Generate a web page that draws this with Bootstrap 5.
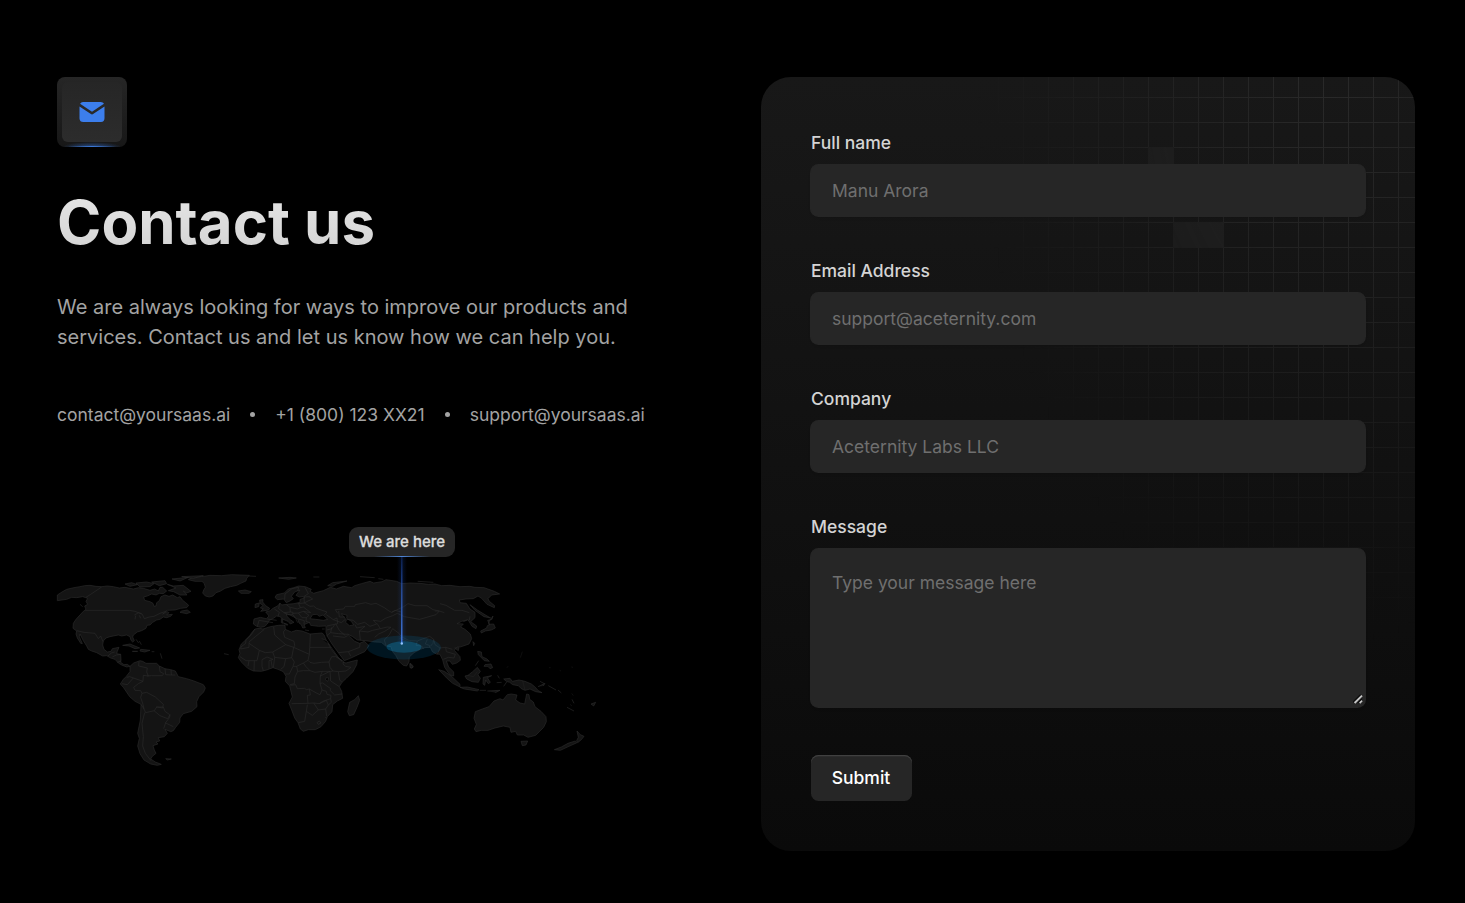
<!DOCTYPE html>
<html lang="en" data-bs-theme="dark">
<head>
<meta charset="utf-8">
<meta name="viewport" content="width=device-width, initial-scale=1">
<title>Contact us</title>
<link href="https://cdn.jsdelivr.net/npm/bootstrap@5.3.0/dist/css/bootstrap.min.css" rel="stylesheet">
<style>
  body { background: #000; color: #a3a3a3; font-family: Inter, "Liberation Sans", sans-serif; overflow: hidden; }
  .page-wrap { padding: 77px 50px 0 57px; }
  .page-wrap > .row { --bs-gutter-x: 50px; }
  .icon-tile { width: 70px; height: 70px; padding: 5px; border-radius: 8px; background: linear-gradient(#262626, #171717); position: relative; overflow: hidden; }
  .icon-tile-inner { width: 60px; height: 60px; border-radius: 6px; background: linear-gradient(#262626, #2c2c2c); }
  .icon-tile .glow { position: absolute; left: 5px; right: 5px; bottom: 0; height: 5px; background: radial-gradient(ellipse at 50% 100%, rgba(59,130,246,.5), transparent 70%); }
  .icon-tile .glow::after { content: ""; position: absolute; left: 0; right: 0; bottom: 0; height: 1px; background: linear-gradient(90deg, transparent 10%, #3b78d8, transparent 90%); }
  .hero-title { font-size: 60px; line-height: 60px; font-weight: 700; margin-top: 45px; background: linear-gradient(#e5e5e5, #d4d4d4); -webkit-background-clip: text; background-clip: text; color: transparent; }
  .hero-copy { font-size: 20px; line-height: 30px; margin-top: 40px; width: 640px; }
  .contact-line { font-size: 17.5px; line-height: 25px; margin-top: 50px; }
  .dot { width: 5px; height: 5px; border-radius: 50%; background: #a3a3a3; margin: 0 20px; }
  .map-box { width: 560px; height: 270px; margin: 80px 0 0 -7px; position: relative; }
  .map-box svg { display: block; }
  .pin-label { position: absolute; left: 299px; top: 20px; width: 106px; height: 30px; border-radius: 9px; background: #262626; color: #dcdcdc; font-size: 15px; line-height: 29px; font-weight: 500; -webkit-text-stroke: .3px #dcdcdc; text-align: center; white-space: nowrap; }
  .pin-label::after { content: ""; position: absolute; left: 25px; right: 25px; bottom: 0; height: 1px; background: linear-gradient(90deg, transparent, #4f86d8, transparent); }
  .form-card { height: 774px; padding: 50px; border-radius: 30px; background: linear-gradient(#181818, #0a0a0a); position: relative; overflow: hidden; }
  .grid-pattern { position: absolute; inset: 0; background-image: linear-gradient(90deg, #2a2a2a 1px, transparent 1px), linear-gradient(#2a2a2a 1px, transparent 1px); background-size: 25px 25px; background-position: 12px 20px; -webkit-mask-image: radial-gradient(ellipse 350px 580px at 565px -10px, #000, transparent); mask-image: radial-gradient(ellipse 350px 580px at 565px -10px, #000, transparent); }
  .grid-pattern i { position: absolute; height: 26px; background: #242424; }
  .grid-pattern .sq-a { left: 387px; top: 70px; width: 26px; }
  .grid-pattern .sq-b { left: 412px; top: 145px; width: 51px; }
  .form-card form { position: relative; }
  .field { margin-bottom: 39.5px; position: relative; }
  .field label { display: block; color: #d4d4d4; font-size: 17.5px; line-height: 25px; font-weight: 500; padding: 3px 0 10px; }
  .field .form-control { display: block; background: #262626; border: 0; border-radius: 7.5px; height: 50.5px; padding: 0 21px; font-size: 17.5px; line-height: 25px; color: #fff; box-shadow: 0 0 0 1px #262626, 0 2px 3px rgba(0,0,0,.1); }
  .field .form-control::placeholder { color: #6f6f6f; opacity: 1; }
  .field textarea.form-control { height: 158px; padding-top: 21px; resize: none; }
  .field-message { margin-bottom: 48px; }
  .grip { position: absolute; right: 2px; bottom: 3px; }
  .btn-send { display: block; width: 101px; height: 46px; padding: 0 1px 0 0; font-size: 17.5px; font-weight: 500; background: #262626; color: #fff; border: 0; border-radius: 7.5px; box-shadow: inset 0 1.25px 0 #404040; }
</style>
</head>
<body>
<main class="page-wrap">
  <div class="row">
    <section class="col-6">
      <div class="icon-tile">
        <div class="icon-tile-inner d-flex align-items-center justify-content-center">
          <svg width="30" height="30" viewBox="0 0 24 24" fill="#3c7eec"><path d="M22 7.535v9.465a3 3 0 0 1 -2.824 2.995l-.176 .005h-14a3 3 0 0 1 -2.995 -2.824l-.005 -.176v-9.465l9.445 6.297l.116 .066a1 1 0 0 0 .878 0l.116 -.066l9.445 -6.297z"/><path d="M19 4c1.08 0 2.027 .57 2.555 1.427l-9.555 6.37l-9.555 -6.37a2.999 2.999 0 0 1 2.354 -1.42l.201 -.007h14z"/></svg>
        </div>
        <span class="glow"></span>
      </div>
      <h1 class="hero-title mb-0">Contact us</h1>
      <p class="hero-copy mb-0">We are always looking for ways to improve our products and services. Contact us and let us know how we can help you.</p>
      <div class="contact-line d-flex align-items-center text-nowrap">
        <span>contact@yoursaas.ai</span><span class="dot"></span><span>+1 (800) 123 XX21</span><span class="dot"></span><span>support@yoursaas.ai</span>
      </div>
      <div class="map-box">
        <svg width="560" height="270" viewBox="50 507 560 270">
          <defs>
            <linearGradient id="beam" x1="0" y1="0" x2="0" y2="1"><stop offset="0" stop-color="#2563eb" stop-opacity=".2"/><stop offset=".5" stop-color="#2f5cb8" stop-opacity=".8"/><stop offset="1" stop-color="#4179dd"/></linearGradient>
            <linearGradient id="haze"><stop offset="0" stop-color="#2563eb" stop-opacity="0"/><stop offset=".5" stop-color="#2563eb" stop-opacity=".25"/><stop offset="1" stop-color="#2563eb" stop-opacity="0"/></linearGradient>
          </defs>
          <g fill="#141414" stroke="#2b2b2b" stroke-width="1.9" stroke-linejoin="round">
            <!-- Americas -->
            <g transform="translate(50 560) scale(.33333)">
              <path d="M22 105L36 96 50 88 72 83 90 80 104 77 120 76 138 79 155 80 172 78 190 80 208 84 225 82 250 87 266 83 280 85 300 91 314 87 325 93 330 82 338 82 350 93 340 101 328 100 318 105 305 102 292 108 281 111 284 121 300 125 309 130 312 139 318 138 320 128 328 122 333 110 345 105 357 109 368 105 382 113 390 110 398 121 407 128 416 136 410 143 392 145 375 150 352 151 338 162 352 155 357 158 350 165 367 163 362 169 350 173 340 171 330 178 320 180 308 187 300 195 291 196 288 205 275 212 262 216 250 225 248 231 253 242 248 246 243 241 240 230 230 225 215 228 205 225 190 228 180 230 168 234 160 243 158 255 162 268 172 276 183 274 187 266 207 262 202 274 200 281 212 283 213 300 212 307 222 314 232 313 240 319 230 321 215 315 205 309 195 298 182 294 170 287 158 288 140 278 125 273 115 268 110 258 100 242 90 222 88 230 97 251 92 250 82 234 78 222 80 213 69 205 70 190 78 178 90 165 100 154 108 148 104 138 113 133 108 124 113 115 98 110 80 113 65 112 50 118 36 120 22 122Z"/>
              <path d="M415 59L430 50 455 50 480 46 515 47 545 44 570 45 598 46 590 55 588 63 572 70 560 76 542 80 525 85 510 94 498 98 489 108 478 111 466 108 458 99 461 90 466 82 463 71 456 64 435 64Z"/>
              <path d="M225 72L245 68 262 74 240 79ZM258 69L290 66 312 71 300 80 270 81ZM305 66L345 62 350 71 328 77ZM352 73L370 78 400 76 423 94 410 99 400 93 411 105 390 105 371 95 355 92 378 84ZM366 57L415 52 390 63ZM395 50L460 47 430 55ZM395 153L412 150 421 157 410 161 390 157ZM218 256L240 252 269 264 255 266 237 258ZM247 274L263 274ZM272 268L300 271 284 276 270 273ZM305 275L313 275M258 238L266 249M268 243L274 254M331 280L336 296M90 133L98 140M347 596L364 597 352 600ZM522 281L536 284"/>
              <path d="M240 319L251 309 270 302 278 304 288 310 320 310 328 318 345 326 362 329 376 333 385 350 410 356 432 363 460 374 466 384 461 396 447 410 440 425 441 440 425 454 400 461 390 474 389 487 377 502 370 512 362 515 345 508 352 520 343 530 325 533 329 543 318 546 324 552 309 557 313 570 318 580 307 589 302 597 316 606 334 613 322 616 302 612 282 600 270 581 263 558 268 535 263 520 271 480 273 433 255 424 239 410 220 382 211 372 220 358 228 350 240 335Z"/>
              <path fill="none" d="M155 81L122 103 108 112M106 151L238 151 255 154 277 163 283 176 298 171 312 169 330 160 350 153M80 212L102 217 135 220 145 236 152 228 159 245M174 288L184 279 194 276M187 291L199 285 212 283M202 307L213 303M267 304L266 318 292 324 290 336 295 348 280 346 279 364 239 350 230 352M216 371L232 374 250 354M279 364L265 371 251 382 255 391 272 392 276 400 290 397 316 411 340 433 338 444 320 441 313 452 287 458 282 447 273 433M276 400L272 412 279 433 282 447M312 452L330 467 353 476 360 464 359 472 347 488 341 506M284 458L276 490 280 530 278 558 286 580 303 602M328 318L330 335 341 341 337 347 304 347 292 348M345 326L347 344 362 345 376 345M363 329L364 345M318 441L322 441 340 441 345 454 359 464M345 488L370 500M253 165L266 158 275 161M257 167L255 178M268 166L272 175"/>
            </g>
            <!-- Europe, Africa and Asia -->
            <g transform="translate(230 560) scale(.33333)">
              <path d="M72 177L70 192 80 199 92 202 103 200 112 192 118 181 130 175 140 168 150 170 159 178 174 184 181 192 192 187 181 179 171 169 169 161 180 165 190 170 204 178 207 189 214 194 218 204 226 203 222 194 238 187 242 196 265 199 288 198 288 217 293 231 306 252 325 278 343 302 361 295 384 284 404 275 417 257 403 244 389 250 374 244 360 230 353 222 368 230 382 240 405 242 435 246 454 247 467 258 483 260 487 274 497 286 507 304 520 316 530 318 537 306 538 291 552 278 571 268 585 263 601 262 607 275 619 282 630 283 638 300 644 322 660 345 671 348 671 336 656 321 649 303 660 303 667 313 680 309 691 301 690 290 673 271 681 261 691 261 717 252 725 236 721 222 705 208 692 201 700 192 681 191 695 184 714 179 726 199 738 206 740 198 722 185 735 173 735 157 720 147 709 130 690 128 688 120 708 117 730 116 744 108 755 115 771 133 793 143 794 137 778 124 774 116 785 105 809 102 793 94 762 83 735 82 719 79 690 80 660 76 635 77 615 72 595 73 570 70 540 69 515 71 500 64 468 59 456 65 431 69 420 64 394 71 374 77 365 83 340 79 319 87 301 82 280 92 261 97 251 100 240 94 244 88 226 80 206 78 191 83 175 87 163 99 140 104 135 112 142 119 161 117 169 128 180 123 190 116 184 109 194 96 210 90 198 106 208 111 220 110 224 114 210 118 210 127 192 131 170 133 155 135 150 129 144 137 129 145 121 152 107 156 117 168 109 176 91 172Z"/>
              <path d="M65 218L75 207 88 205 99 207 121 200 145 196 165 195 166 208 184 216 199 211 216 213 240 222 276 219 282 224 289 241 300 259 309 271 324 291 337 306 348 309 366 304 382 300 380 314 369 335 349 355 336 367 328 380 335 394 338 415 322 423 308 434 306 455 292 470 287 484 273 500 256 509 235 509 220 514 211 507 204 488 194 474 185 450 177 430 187 411 182 390 179 378 166 364 168 349 160 335 144 328 129 323 110 330 94 334 70 333 53 325 35 307 25 293 30 280 27 269 34 252 48 239 59 227Z"/>
              <path d="M385 407L389 421 381 442 371 464 358 467 353 455 359 427 374 419ZM89 120L99 119 98 126 107 137 119 145 116 150 92 154 100 146 91 144 99 136 90 130ZM76 132L88 129 86 140 75 143ZM25 93L45 90 64 95 57 100 33 100ZM540 309L550 318 546 325 540 322ZM146 54L180 52 199 54 176 58ZM293 77L308 68 351 63 320 72 308 79ZM390 50L434 53M445 56L460 58M160 189L173 193 172 196ZM154 176L158 176 158 190 154 188ZM225 210L237 212M276 207L284 207M250 51L268 51M56 48L78 49"/>
              <path fill="#000" d="M240 176L248 164 261 163 268 169 279 165 293 178 280 181 257 178ZM334 161L351 166 350 175 364 184 371 195 358 197 347 187 349 180ZM288 353L296 354 293 364 287 360ZM275 236L290 242 324 292 337 303 323 293 304 268 295 251"/>
              <path fill="none" d="M75 207L64 224 48 239 47 250 33 261 32 267M32 267L57 262 57 246 76 230 103 208M57 250L88 271 81 302 48 302 30 290M88 271L106 278 128 276 167 254 134 225 131 201M167 254L191 262 194 257 192 244 164 232 160 216 166 208M191 262L238 283 240 248 241 222M240 262L302 262M238 283L234 301 240 307 252 310 274 307 297 306 305 290 317 290 341 304 339 312 347 319 363 322 348 333 325 335 309 333 300 322 297 306M128 276L134 292 167 296 185 293 191 262M185 293L193 306 189 319 200 319 220 309 234 301M134 292L130 323M167 296L162 320 152 328M189 319L178 342 166 342M200 319L203 334 220 332 240 332 255 337 277 334 302 334M203 334L195 351 193 371 180 374M240 332L228 320 220 309M277 334L271 348 270 370 276 390 270 404 261 400 243 390 238 387 229 389 224 385 202 386 197 374 181 376M271 348L300 334 302 363 328 380M302 334L309 333M325 335L329 360 336 367M270 370L278 369 302 386 300 391 314 405 337 402M276 390L289 394 291 403 303 406 302 416 278 424 268 431 251 429 234 430 232 406 241 405 238 387M234 430L185 431M232 434L229 454 224 484 205 488M229 454L247 466 265 450 251 429M268 431L289 421 295 435 287 447 265 450M287 447L290 469M302 416L304 427 295 435M261 488L268 483 273 489 265 493ZM286 471L290 475M57 302L54 318M73 302L72 333M96 299L96 319 100 332M96 299L111 291 129 298 117 302 117 326M123 300L127 323M129 188L87 181 82 200M112 177L140 181M133 147L148 157 144 169M149 130L146 146 162 158 181 156 180 142 169 134M181 142L202 147 211 143 206 131M162 158L173 164 188 164 189 157 181 156M188 160L205 159 220 154 242 158M205 159L216 173 229 173 237 166M220 154L237 166M189 164L197 175 203 188M205 177L223 182 222 192M229 173L228 184 240 188M203 131L223 129 240 139 251 138 259 145 291 156 283 165M223 129L222 111 238 110M242 158L220 141 211 143M164 118L165 102 186 86 206 82M206 82L203 93M225 82L235 101 221 110M237 110L248 117 234 123 223 129M289 164L310 179 321 174 323 191 291 198M310 179L334 188 346 178M314 194L306 206 290 210M305 202L302 218 289 228M302 218L326 221 353 223M317 191L328 211 346 227M309 228L343 232 353 227M355 275L389 262 390 250M325 278L355 275 362 288M323 160L316 149 341 147 346 139 374 139 376 134 407 128 423 133 438 130 463 143 477 153 485 157M326 153L328 171 346 171M350 178L370 181 383 193 404 187 420 199 440 192 430 181 452 184 466 175 488 167 502 160 523 170 569 178 618 164 628 153 609 149 591 137 555 137 534 131 521 140 485 157M375 194L380 204 405 199M405 199L388 213 391 241M388 213L414 216 428 211 451 206 441 190M451 206L472 201 483 202 464 214 446 222 434 232M488 206L478 224 463 240 468 257M488 206L507 220 514 230 538 242 562 243 577 237 599 229 611 238 615 254 630 264 647 262 667 268M514 230L510 236 535 244M562 243L558 256 575 258 581 266M592 238L586 252 598 256 599 263M611 238L609 250 601 259M630 264L622 283M647 262L649 275 676 283 672 294 655 292 640 298M630 131L648 136 674 151 696 151 718 158M614 153L628 153 643 158M700 185L712 180M718 180L720 169M485 157L495 151 514 156"/>
            </g>
            <!-- South-east Asia and Oceania -->
            <g transform="translate(410 560) scale(.33333)">
              <path d="M196 455L217 447 237 440 252 423 270 416 279 420 292 404 304 402 321 405 317 420 330 429 344 432 350 402 357 404 359 418 370 426 375 440 393 454 408 470 409 485 401 502 388 515 377 526 354 532 341 525 322 525 317 514 303 517 300 502 280 498 255 504 234 511 214 511 198 515 193 507 199 493 192 475Z"/>
              <path d="M333 544L353 543 348 555 337 557ZM501 513L511 524 522 529 514 539 503 548 500 542 505 532ZM496 543L501 548 477 559 451 571 433 569 454 561 474 550ZM86 329L103 334 126 350 150 373 150 381 128 370 112 356ZM150 382L172 381 207 389 202 393 163 387ZM209 391L228 391M232 393L270 391 256 398M165 348L174 346 188 335 202 322 211 334 204 344 211 355 205 367 186 365 170 357ZM220 352L245 347 232 353 241 367 235 371 227 360 224 376 219 372ZM263 346L268 355M281 357L300 355 307 364 327 360 345 364 364 372 374 380 385 392 396 398 377 395 360 387 345 391 334 386 325 377 308 374 299 367 289 364ZM203 274L214 276 216 290 231 297 238 304 223 302 205 284ZM225 314L243 312 248 323 240 326 234 319 222 319ZM206 302L196 317M189 245L194 250 191 257ZM134 264L147 263 145 272ZM249 168L238 184 236 193 251 192 256 204 244 210 226 213 214 219 212 213 230 204 232 197 239 195 233 181 246 178ZM180 134L202 150 228 166 242 174 222 170 195 151ZM384 380L405 370 400 378M390 364L403 371M415 377L438 390M444 390L454 399M471 442L492 453M486 418L492 430M543 432L557 427 551 438ZM23 64L70 67M275 367L260 368M290 366L281 379M0 312L9 322 1 324Z"/>
              <path fill="none" stroke-width="1" d="M338 362L345 391M173 346L190 350 202 335M337 275L331 293M290 322L295 320M417 323L422 323M449 331L453 333M484 321L489 322M485 400L490 407M480 433L486 438"/>
            </g>
          </g>
          <ellipse cx="404" cy="647.5" rx="37" ry="12" fill="#0284c7" opacity=".16"/>
          <ellipse cx="404" cy="647" rx="17.5" ry="5.8" fill="#0ea5e9" opacity=".27"/>
          <rect x="397" y="557" width="10" height="87" fill="url(#haze)" opacity=".6"/>
          <rect x="401" y="557" width="1.5" height="87" fill="url(#beam)"/>
          <circle cx="401.8" cy="643.5" r="1.2" fill="#93c5fd"/>
        </svg>
        <div class="pin-label">We are here</div>
      </div>
    </section>
    <section class="col-6">
      <div class="form-card">
        <div class="grid-pattern"><i class="sq-a"></i><i class="sq-b"></i></div>
        <form>
          <div class="field"><label for="name">Full name</label><input id="name" class="form-control" type="text" placeholder="Manu Arora"></div>
          <div class="field"><label for="email">Email Address</label><input id="email" class="form-control" type="email" placeholder="support@aceternity.com"></div>
          <div class="field"><label for="company">Company</label><input id="company" class="form-control" type="text" placeholder="Aceternity Labs LLC"></div>
          <div class="field field-message"><label for="message">Message</label><textarea id="message" class="form-control" placeholder="Type your message here"></textarea>
            <svg class="grip" width="10" height="10" viewBox="0 0 10 10" fill="none"><path d="M0 8.2L7.6 .8" stroke="#0c0c0c" stroke-width="1.4"/><path d="M1.6 9L9 1.6M6.6 9L9 6.6" stroke="#c4c4c4" stroke-width="1.9"/><path d="M4.6 9L9 4.6" stroke="#0c0c0c" stroke-width="1.1"/></svg>
          </div>
          <button type="button" class="btn btn-send">Submit</button>
        </form>
      </div>
    </section>
  </div>
</main>
<script src="https://cdn.jsdelivr.net/npm/bootstrap@5.3.0/dist/js/bootstrap.bundle.min.js"></script>
</body>
</html>
